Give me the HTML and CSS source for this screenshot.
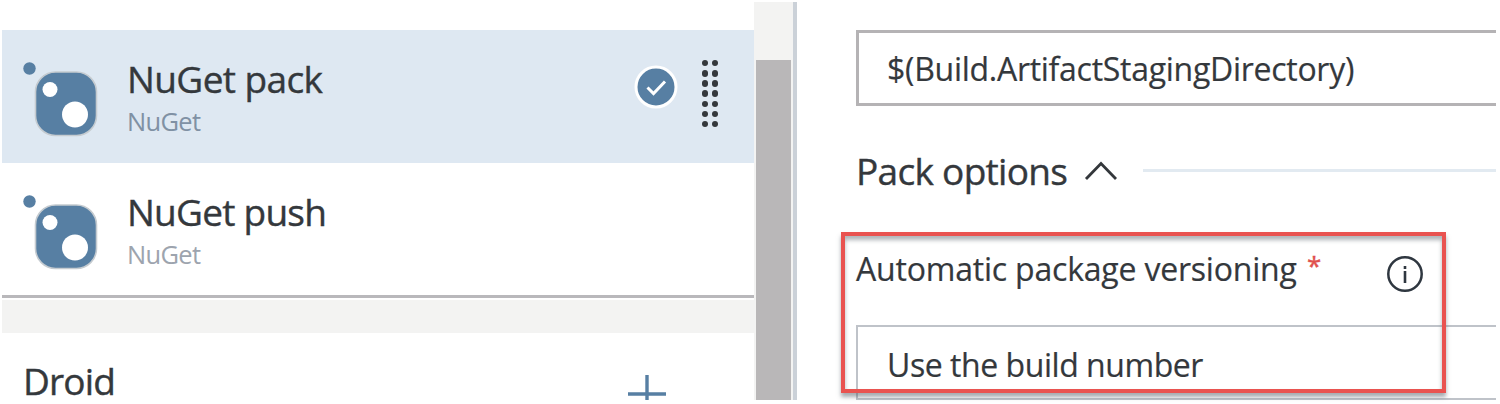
FILE: index.html
```html
<!DOCTYPE html>
<html lang="en">
<head>
<meta charset="utf-8">
<title>Build tasks</title>
<link rel="stylesheet" href="styles.css">
</head>
<body>
<svg class="defs" aria-hidden="true">
  <symbol id="nuget" viewBox="0 0 80 80">
    <circle cx="7.5" cy="7.5" r="6.2"/>
    <rect x="13.5" y="11" width="61" height="63.5" rx="20" fill="#577fa3" stroke="#c5cbd0" stroke-width="1.6"/>
    <circle class="hole" cx="28" cy="28.5" r="7.5"/>
    <circle class="hole" cx="53" cy="53.5" r="13"/>
  </symbol>
</svg>
<main class="app">
  <section class="tasks">
    <article class="task selected">
      <svg class="logo"><use href="#nuget"/></svg>
      <div class="task-text">
        <h2 class="title pack">NuGet pack</h2>
        <p class="sub">NuGet</p>
      </div>
      <svg class="check" viewBox="0 0 44 44">
        <circle cx="22" cy="22" r="20" fill="#577fa3" stroke="#fff" stroke-width="3"/>
        <path d="M13.5 22.5l6 6 11.500-12" fill="none" stroke="#fff" stroke-width="3"/>
      </svg>
      <div class="grip"><i></i><i></i><i></i><i></i><i></i><i></i><i></i><i></i><i></i><i></i><i></i><i></i><i></i><i></i></div>
    </article>
    <article class="task">
      <svg class="logo"><use href="#nuget"/></svg>
      <div class="task-text">
        <h2 class="title push">NuGet push</h2>
        <p class="sub">NuGet</p>
      </div>
    </article>
    <div class="divider"></div>
    <header class="phase">
      <h2 class="title droid">Droid</h2>
      <svg class="plus" viewBox="0 0 38 25"><path d="M19 0v25M0 19h38" stroke="#577fa3" stroke-width="3.4"/></svg>
    </header>
  </section>
  <div class="scrollbar"><div class="thumb"></div></div>
  <section class="details">
    <div class="field"><span class="value path">$(Build.ArtifactStagingDirectory)</span></div>
    <div class="group">
      <h2 class="group-title">Pack options</h2>
      <svg class="chevron" viewBox="0 0 34 20"><path d="M2 18L17 2.500 32 18" fill="none" stroke="#33373b" stroke-width="2.8"/></svg>
      <div class="rule"></div>
    </div>
    <div class="label-row">
      <label class="label">Automatic package versioning</label>
      <span class="required">*</span>
      <svg class="info" viewBox="0 0 38 38">
        <circle cx="19" cy="19" r="16.7" fill="none" stroke="#2f3740" stroke-width="2.5"/>
        <path d="M19 16v12M19 11v3" stroke="#2f3740" stroke-width="2.6"/>
      </svg>
    </div>
    <div class="select"><span class="value choice">Use the build number</span></div>
    <div class="highlight"></div>
  </section>
</main>
</body>
</html>
```
FILE: styles.css
```css
* { box-sizing: border-box; margin: 0; }
body {
  width: 1500px;
  height: 404px;
  padding: 2px 4px 4px 2px;
  background: #fff;
  color: #34383c;
  font-family: "Open Sans", "Noto Sans", sans-serif;
}
h2 { font-weight: 400; }
.defs { display: none; }
.app { display: flex; height: 398px; }
.tasks { width: 752px; padding-top: 28px; }
.task { display: flex; height: 132px; padding: 26px 36px 0 20px; align-items: flex-start; }
.task.selected { height: 133px; background: #dee8f2; }
.logo { width: 80px; height: 80px; margin-top: 5px; fill: #577fa3; }
.hole { fill: #fff; }
.task-text { width: 230px; margin-left: 25px; padding-top: 1px; white-space: nowrap; }
.title { font-size: 37px; line-height: 44px; white-space: nowrap; -webkit-text-stroke: .4px; }
.pack { letter-spacing: -.6px; }
.push { letter-spacing: -.75px; }
.sub { margin-top: 2px; font-size: 25.5px; line-height: 36px; color: #8091a4; letter-spacing: -.7px; }
.task:not(.selected) .sub { color: #9da4ae; }
.check { width: 44px; height: 44px; margin: 9px 0 0 auto; }
.grip {
  display: grid;
  grid-template-columns: 6px 6px;
  grid-auto-rows: 6px;
  gap: 4.15px 4px;
  margin: 4px 0 0 24px;
}
.grip i { width: 6.4px; height: 6.4px; border-radius: 50%; background: #34383c; }
.divider { height: 38px; border-top: 3px solid #b9b8bb; background: linear-gradient(#fff 2px, #f3f3f2 2px); }
.phase { display: flex; height: 67px; padding: 26px 88px 0 21px; justify-content: space-between; }
.droid { height: 34px; margin-top: 5px; line-height: 34px; letter-spacing: -.8px; }
.plus { width: 38px; height: 25px; margin-top: 16px; }
.scrollbar { width: 43px; padding: 58px 2px 0; border-right: 4px solid #cbd1d8; background: #f3f3f2; }
.thumb { height: 340px; background: #b9b7b8; }
.details { position: relative; flex: 1; padding: 28px 0 0 59px; white-space: nowrap; }
.field { height: 76px; padding: 14px 0 0 28px; border: 3px solid #b5b3b5; border-right: 0; }
.value { display: block; font-size: 32px; line-height: 44px; -webkit-text-stroke: .2px; }
.path { letter-spacing: -.28px; }
.choice { letter-spacing: -.45px; }
.group { display: flex; height: 100px; padding-top: 43px; align-items: flex-start; }
.group-title { width: 211px; font-size: 37px; line-height: 44px; letter-spacing: -.7px; -webkit-text-stroke: .4px; }
.chevron { width: 34px; height: 20px; margin: 12px 0 0 17px; }
.rule { flex: 1; height: 3px; margin: 20px 0 0 25px; background: #e2eaf1; }
.label-row { display: flex; height: 119px; padding-top: 39px; align-items: flex-start; }
.label { width: 442px; margin-top: 2px; font-size: 32px; line-height: 44px; letter-spacing: -.2px; -webkit-text-stroke: .2px; }
.required { width: 20px; margin: -2px 0 0 9px; font-size: 26px; line-height: 44px; color: #e0504e; -webkit-text-stroke: .4px; }
.info { width: 38px; height: 38px; margin: 10px 0 0 59px; }
.select { height: 75px; padding: 16px 0 0 29px; border: 2px solid #bfc3c9; border-right: 0; }
.highlight {
  position: absolute;
  left: 44px;
  top: 230px;
  width: 605px;
  height: 161px;
  border: 4px solid #e95350;
  box-shadow: 0 4px 4px rgba(80,90,100,.5), inset 0 4px 4px rgba(80,90,100,.45);
}
```
